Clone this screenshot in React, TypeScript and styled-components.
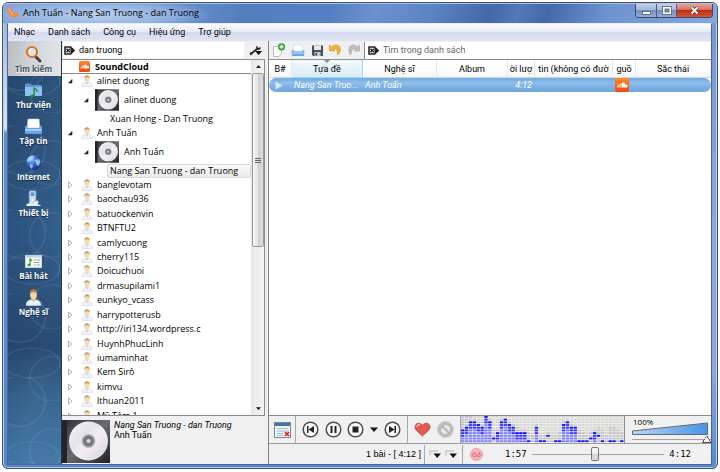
import React from "react";
import styled, { createGlobalStyle, css } from "styled-components";

const narrow = `Roboto, "Noto Sans", sans-serif`;

const Global = createGlobalStyle`
  * { box-sizing: border-box; }
  html, body { margin: 0; background: #fff; }
  body { font-family: "Open Sans", "Noto Sans", sans-serif; font-size: 9px; line-height: 14px; color: #000; overflow: hidden; }
  button, input { font: inherit; color: inherit; margin: 0; padding: 0; border: 0; background: none; }
  button { cursor: default; white-space: nowrap; }
  svg { display: block; flex: none; }
`;

/* ---------- window frame ---------- */

const Frame = styled.div`
  display: flex;
  flex-direction: column;
  height: calc(100vh - 5px);
  margin: 2px;
  padding: 0 5px 3px 4px;
  border: 1px solid #44536b;
  border-radius: 6px;
  background:
    linear-gradient(180deg, #86aadc 0, #b4cbed 12%, #d3e2f5 27%, #5a8fd2 28%, #5189cf 100%) left / 5px 100% no-repeat,
    linear-gradient(180deg, #7396d2 0, #8da4da 40%, #8fa5da 80%, #5189cf 100%) right / 5px 100% no-repeat,
    linear-gradient(180deg, #5189cf, #4d86cc) bottom / 100% 5px no-repeat,
    #5b83c6;
  box-shadow: inset 0 0 0 1px #b9cdea;
`;

const TitleBar = styled.header`
  display: flex;
  align-items: flex-start;
  height: 20px;
  flex: none;
  margin: 0 -5px 0 -4px;
  padding-left: 4px;
  border-radius: 5px 5px 0 0;
  border-top: 1px solid #a9c0e4;
  background:
    radial-gradient(ellipse 115px 16px at 95px 11px, rgba(190, 211, 240, 0.95), rgba(160, 190, 230, 0.75) 60%, transparent),
    linear-gradient(110deg, #84a3d5 0, #6f95cf 22%, #547dc0 34%, #567ec2 46%, #6c91cf 52%, #5b83c5 60%, #4468aa 68%, #5279bb 72%, #4468aa 76%, #6d92d0 84%, #86a8de 100%);
`;

const Title = styled.h1`
  flex: 1;
  margin: 2px 0 0 3px;
  font-size: 9px;
  line-height: 14px;
  font-weight: 400;
`;

const WindowButtons = styled.div`
  display: flex;
  height: 14px;
  margin-right: 4px;
  border: 1px solid #39496a;
  border-top: 0;
  border-radius: 0 0 4px 4px;
  overflow: hidden;
`;

const WindowButton = styled.button<{ $close?: boolean }>`
  display: flex;
  align-items: center;
  justify-content: center;
  width: ${(p) => (p.$close ? 36 : 20)}px;
  border-left: 1px solid #4c5f85;
  background: ${(p) =>
    p.$close
      ? "linear-gradient(#e3a597 0, #d4715e 45%, #bb2d15 50%, #d2573a 100%)"
      : "linear-gradient(#c4d1e8 0, #a3b7da 45%, #7690c0 50%, #93add8 100%)"};
  &:first-child { border-left: 0; }
`;

const Client = styled.div`
  display: flex;
  flex-direction: column;
  flex: 1;
  min-height: 0;
  border: 1px solid #50668c;
  border-top-color: #e9eef8;
  background: #f0f0f0;
`;

const MenuBar = styled.nav`
  display: flex;
  gap: 13px;
  flex: none;
  height: 17px;
  padding: 0 6px 2px;
  font-family: ${narrow};
  background: linear-gradient(#fbfcfe 0, #e6eaf6 45%, #d5dbee 50%, #dfe5f4 100%);
`;

const Columns = styled.div`
  display: grid;
  grid-template-columns: 54px 204px 1fr;
  flex: 1;
  min-height: 0;
`;

/* ---------- sidebar ---------- */

const Sidebar = styled.nav`
  display: flex;
  flex-direction: column;
  min-height: 0;
  border-right: 1px solid #1d3654;
  background:
    radial-gradient(circle at 12px 24px, transparent 24px, rgba(150, 190, 225, 0.16) 25px, transparent 27px) 0 0 / 58px 84px,
    radial-gradient(circle at 44px 50px, transparent 21px, rgba(150, 190, 225, 0.14) 22px, transparent 24px) 0 0 / 66px 72px,
    radial-gradient(ellipse 30px 16px at 24px 40px, transparent 88%, rgba(150, 190, 225, 0.16) 92%, transparent 100%) 0 0 / 54px 94px,
    linear-gradient(100deg, rgba(20, 45, 80, 0.45), transparent 70%),
    linear-gradient(#33597f 0, #34618f 45%, #2a4a70 72%, #38668f 84%, #4779a8 100%);
`;

const SideButton = styled.button<{ $active?: boolean; $gap?: boolean }>`
  display: flex;
  flex-direction: column;
  align-items: center;
  height: 36px;
  flex: none;
  padding: 6px 2px 0 0;
  margin-top: ${(p) => (p.$gap ? 27 : 0)}px;
  font-size: 8px;
  line-height: 10px;
  font-weight: 700;
  color: #fff;
  text-shadow: 0 1px 1px #10233c;
  svg { margin-bottom: 1px; }
  ${(p) =>
    p.$active &&
    css`
      height: 35px;
      padding-top: 4px;
      color: #4a535c;
      text-shadow: 0 1px 0 #fff;
      background: linear-gradient(100deg, #b9bec4, #d8dadd 60%, #e2e3e5);
    `}
`;

/* ---------- left panel ---------- */

const LeftPanel = styled.section`
  display: flex;
  flex-direction: column;
  min-width: 0;
  min-height: 0;
`;

const SearchRow = styled.div`
  display: flex;
  align-items: center;
  height: 18px;
  flex: none;
`;

const SearchBox = styled.label<{ $full?: boolean }>`
  display: flex;
  align-items: center;
  gap: 4px;
  flex: 1;
  min-width: 0;
  height: ${(p) => (p.$full ? 17 : 16)}px;
  padding-left: ${(p) => (p.$full ? 3 : 1)}px;
  border-left: 1px solid ${(p) => (p.$full ? "#888" : "#ddd")};
  background: #fff;
  font-family: ${narrow};
  input { flex: 1; min-width: 0; height: 14px; outline: 0; }
  input::placeholder { color: #666; opacity: 1; }
`;

const PlainButton = styled.button`
  display: flex;
  align-items: center;
  justify-content: center;
`;

const WrenchButton = styled(PlainButton)`
  width: 22px;
`;

const TreeBox = styled.div`
  display: flex;
  flex: 1;
  min-height: 0;
  margin-right: 1px;
  border: 1px solid #8c8c8c;
  border-left: 0;
  background: #fff;
`;

const TreeBody = styled.div`
  display: flex;
  flex-direction: column;
  flex: 1;
  min-width: 0;
  overflow: hidden;
`;

const Source = styled.div`
  display: flex;
  align-items: center;
  gap: 5px;
  height: 14px;
  flex: none;
  padding-left: 17px;
  border-bottom: 1px solid #8a8a8a;
  font-weight: 700;
`;

const ArtistRow = styled.div`
  display: flex;
  align-items: center;
  height: 14px;
  flex: none;
  padding-left: 4px;
  white-space: nowrap;
  svg:first-child { margin-right: 7px; }
  svg + svg { margin-right: 4px; }
`;

const AlbumRow = styled.div`
  display: flex;
  align-items: center;
  height: 24px;
  flex: none;
  padding-left: 20px;
  svg:first-child { margin-right: 5px; }
  svg + svg { margin-right: 5px; }
`;

const TrackRow = styled.div<{ $selected?: boolean }>`
  height: 14px;
  flex: none;
  margin-left: 45px;
  padding-left: 2px;
  border: 1px solid ${(p) => (p.$selected ? "#dadada" : "transparent")};
  border-radius: 2px;
  background: ${(p) => (p.$selected ? "linear-gradient(#fafafa, #e9e9e9)" : "none")};
  line-height: 12px;
  white-space: nowrap;
`;

const ArtistList = styled.div`
  display: grid;
  grid-auto-rows: 1fr;
  height: 245px;
  flex: none;
`;

const ScrollBar = styled.div`
  display: flex;
  flex-direction: column;
  align-items: center;
  width: 13px;
  border-left: 1px solid #e4e4e4;
  background: linear-gradient(90deg, #e9e9e9, #f4f4f4);
`;

const ScrollArrow = styled(PlainButton)`
  width: 12px;
  height: 13px;
`;

const Thumb = styled.div`
  display: flex;
  align-items: center;
  justify-content: center;
  width: 12px;
  height: 174px;
  border: 1px solid #9a9a9a;
  border-radius: 2px;
  background: linear-gradient(90deg, #f6f6f6, #e4e4e4 45%, #cfcfcf 50%, #dcdcdc);
`;

const Filler = styled.div`
  flex: 1;
`;

const NowPlaying = styled.div`
  display: flex;
  gap: 4px;
  height: 48px;
  flex: none;
  padding-top: 4px;
  font-family: ${narrow};
  line-height: 10px;
  p { margin: 0; white-space: nowrap; }
`;

/* ---------- right panel ---------- */

const RightPanel = styled.section`
  display: flex;
  flex-direction: column;
  min-width: 0;
  min-height: 0;
  margin-left: 2px;
  border-left: 1px solid #808080;
`;

const Toolbar = styled.div`
  display: flex;
  align-items: center;
  height: 19px;
  flex: none;
  border-bottom: 1px solid #8c8c8c;
`;

const Tools = styled.div`
  display: flex;
  align-items: center;
  justify-content: space-between;
  width: 95px;
  padding: 0 4px 0 3px;
`;

const Playlist = styled.div`
  flex: 1;
  min-height: 0;
  overflow: hidden;
  background: #fff;
  font-family: ${narrow};
`;

const Table = styled.table`
  width: 100%;
  table-layout: fixed;
  border-collapse: separate;
  border-spacing: 0;
`;

const Head = styled.th<{ $sorted?: boolean }>`
  height: 18px;
  padding: 0;
  border-right: 1px solid ${(p) => (p.$sorted ? "#96d9f9" : "#e4e8ef")};
  border-bottom: 1px solid ${(p) => (p.$sorted ? "#96d9f9" : "#d5d5d5")};
  background: ${(p) => (p.$sorted ? "linear-gradient(#f2f9fc, #d8ecf6)" : "linear-gradient(#fff 40%, #f3f4f6)")};
  font-weight: 400;
  white-space: nowrap;
  overflow: hidden;
`;

const HeadLabel = styled.div`
  display: flex;
  justify-content: center;
  line-height: 15px;
  padding-top: 2px;
`;

const SortMark = styled.div`
  display: flex;
  justify-content: center;
  height: 0;
`;

const Row = styled.tr`
  color: #fff;
  font-style: italic;
  td {
    height: 14px;
    padding: 0 3px 0 2px;
    line-height: 14px;
    white-space: nowrap;
    background: linear-gradient(#6fa8e0 0, #8fbeec 35%, #7fb2e6 60%, #72a7dd 100%);
  }
  td:first-child { border-radius: 7px 0 0 7px; padding-left: 6px; }
  td:last-child { border-radius: 0 7px 7px 0; }
`;

const EndCell = styled.td`
  text-align: right;
`;

const Controls = styled.div`
  display: flex;
  height: 29px;
  flex: none;
  border-top: 1px solid #8c8c8c;
  border-bottom: 1px solid #9a9a9a;
`;

const Group = styled.div<{ $w: number }>`
  display: flex;
  align-items: center;
  justify-content: space-evenly;
  width: ${(p) => p.$w}px;
  flex: none;
  border-right: 1px solid #a8a8a8;
`;

const Spectrum = styled.div`
  flex: 1;
  min-width: 0;
  border-right: 1px solid #8c8c8c;
  svg { width: 100%; height: 27px; }
`;

const Volume = styled.label`
  display: flex;
  flex-direction: column;
  width: 86px;
  flex: none;
  padding: 1px 4px 0 7px;
  font-size: 8px;
  line-height: 8px;
  svg { margin-top: -4px; }
`;

const VolumeText = styled.span`
  padding: 1px 0 0 1px;
`;

const Slider = styled.input<{ $thumb: "tri" | "box" }>`
  appearance: none;
  flex: ${(p) => (p.$thumb === "box" ? "1" : "none")};
  min-width: 0;
  width: ${(p) => (p.$thumb === "tri" ? "79px" : "auto")};
  height: ${(p) => (p.$thumb === "tri" ? 8 : 16)}px;
  background: linear-gradient(#a5a5a5, #a5a5a5) center / 100% 1px no-repeat;
  ${(p) =>
    p.$thumb === "box"
      ? css`
          &::-webkit-slider-thumb {
            appearance: none;
            width: 8px;
            height: 14px;
            border: 1px solid #777;
            border-radius: 2px;
            background: linear-gradient(#fafafa, #e9e9e9 50%, #d2d2d2 55%, #dedede);
          }
        `
      : css`
          &::-webkit-slider-thumb {
            appearance: none;
            width: 9px;
            height: 7px;
            background:
              linear-gradient(#555, #555) bottom / 100% 1px no-repeat,
              linear-gradient(to bottom right, transparent 46%, #555 47% 56%, #fff 57%) left / 50% 100% no-repeat,
              linear-gradient(to bottom left, transparent 46%, #555 47% 56%, #fff 57%) right / 50% 100% no-repeat;
          }
        `}
`;

const StatusBar = styled.footer`
  display: flex;
  align-items: center;
  height: 20px;
  flex: none;
`;

const Count = styled.div`
  display: flex;
  align-items: center;
  justify-content: flex-end;
  width: 156px;
  height: 19px;
  padding-right: 3px;
  border-right: 1px solid #a8a8a8;
  font-family: "Liberation Sans", sans-serif;
`;

const StatusGroup = styled(Group)`
  height: 19px;
`;

const Seek = styled.div`
  display: flex;
  align-items: center;
  gap: 5px;
  flex: 1;
  min-width: 0;
  padding: 0 20px 0 7px;
  font-family: "DejaVu Sans Mono", monospace;
  svg { margin-right: 17px; }
`;

/* ---------- drawings ---------- */

const Arrow = ({ open }: { open?: boolean }) => (
  <svg width="8" height="8" viewBox="0 0 8 8">
    {open ? <path d="M6 2.500v3.500H2.500z" fill="#222" stroke="#222" strokeWidth=".6" /> : <path d="M2.500 1l3.500 3-3.500 3z" fill="#fff" stroke="#a8a8a8" strokeWidth=".9" />}
  </svg>
);

const Person = ({ size = 12 }: { size?: number }) => (
  <svg width={size} height={size} viewBox="0 0 16 16" opacity={size > 12 ? 1 : 0.8}>
    <path d="M1 15.500c0-4 2.500-5 5-5.500h4c2.500.500 5 1.500 5 5.500z" fill="#e9f0f8" stroke="#b9cbe0" strokeWidth=".7" />
    <path d="M6 9.500l2 3 2-3z" fill="#e8b98d" />
    <ellipse cx="8" cy="5.500" rx="3.200" ry="4.300" fill="#f6d2ab" />
    <path d="M4.600 5.500C4 1.500 6 .3 8 .3s4 1.200 3.400 5.200C11 3.500 10 3 8 3s-3 .500-3.400 2.500z" fill="#c07f3c" />
  </svg>
);

const Disc = ({ w, h }: { w: number; h: number }) => (
  <svg width={w} height={h} viewBox="0 0 48 43">
    <defs>
      <linearGradient id={`case${w}`} x2="1" y2="1">
        <stop offset="0" stopColor="#2c2e30" />
        <stop offset=".5" stopColor="#6a6d70" />
        <stop offset="1" stopColor="#1e1f21" />
      </linearGradient>
      <linearGradient id={`disc${w}`} x2="1" y2="1">
        <stop offset="0" stopColor="#fafafa" />
        <stop offset=".35" stopColor="#e4e3e8" />
        <stop offset=".55" stopColor="#f4eef2" />
        <stop offset="1" stopColor="#d3d4d8" />
      </linearGradient>
    </defs>
    <rect width="48" height="43" fill={`url(#case${w})`} />
    <rect width="5" height="43" fill="#222426" />
    <circle cx="26.500" cy="21" r="19.500" fill={`url(#disc${w})`} />
    <circle cx="26.500" cy="21" r="7" fill="#b5b5b8" />
    <circle cx="26.500" cy="21" r="5.500" fill="#77797c" />
    <circle cx="26.500" cy="21" r="2" fill="#ddd" />
  </svg>
);

const SoundCloud = ({ size }: { size: number }) => (
  <svg width={size} height={size} viewBox="0 0 14 14">
    <defs>
      <linearGradient id={`sc${size}`} x2="0" y2="1">
        <stop offset="0" stopColor="#ff8a2a" />
        <stop offset="1" stopColor="#f4470c" />
      </linearGradient>
    </defs>
    <rect width="14" height="14" rx="2" fill={`url(#sc${size})`} />
    <path d="M7 9.500V4.800a2.600 2.600 0 0 1 3.400 2 1.500 1.500 0 1 1 .4 2.700zM2 7.500h.7v2H2zM3.300 6.500h.8v3h-.8zM4.600 6h.7v3.500h-.7zM5.700 5h.8v4.500h-.8z" fill="#fff" />
  </svg>
);

const ClearIcon = () => (
  <svg width="11" height="9" viewBox="0 0 11 9">
    <path d="M1 1h5.500L10 4.500 6.500 8H1z" fill="#fff" stroke="#222" strokeWidth="1.600" />
    <path d="M6.500 1v7L10 4.500z" fill="#222" />
    <path d="M2.500 2.700l3.500 3.600m0-3.600L2.500 6.300" stroke="#222" strokeWidth="1.400" />
  </svg>
);

const Wrench = () => (
  <svg width="13" height="13" viewBox="0 0 13 13">
    <path d="M2 9.800L8.500 4.500" stroke="#333" strokeWidth="2" />
    <path d="M8 1.500l1 2.500 2.500-1c.7 2-1 3.500-3 3S6.500 3 8 1.500zM1 8.500c1.300-.7 3.200.3 2.700 2l-1.200-.2-.5 1.200C.8 11 .3 9.500 1 8.500z" fill="#333" />
    <path d="M6 7h7L9.500 11z" fill="#111" />
  </svg>
);

const Search = () => (
  <svg width="17" height="18" viewBox="0 0 17 18">
    <path d="M10.500 11.500l4.500 4.500" stroke="#4a4038" strokeWidth="3" strokeLinecap="round" />
    <circle cx="7" cy="7" r="5" fill="#dfe3e4" stroke="#cf7a28" strokeWidth="2.200" />
    <path d="M4 7a3 3 0 0 1 3-3" stroke="#fff" fill="none" />
  </svg>
);

const Library = () => (
  <svg width="19" height="17" viewBox="0 0 19 17">
    <path d="M1 2.500q0-1 1-1h4l1.500 1.500H17q1 0 1 1V13q0 1-1 1H2q-1 0-1-1z" fill="#5b96dc" />
    <path d="M1 5h17v8q0 1-1 1H2q-1 0-1-1z" fill="#8fc0f2" />
    <path d="M10 14V6q3 1 3 4" stroke="#1a8a2b" strokeWidth="1.300" fill="none" />
    <ellipse cx="8.300" cy="14" rx="2" ry="1.500" fill="#1a8a2b" />
  </svg>
);

const Files = ({ w = 19, h = 17 }: { w?: number; h?: number }) => (
  <svg width={w} height={h} viewBox="0 0 19 17">
    <path d="M4 1h11l1 9H3z" fill="#fff" stroke="#b9cbe0" strokeWidth=".6" />
    <path d="M1 8h2.500v2h12V8H18v7q0 1-1 1H2q-1 0-1-1z" fill="#6ba4e6" />
    <path d="M1.500 11h16v2h-16z" fill="#a9cff6" />
  </svg>
);

const Globe = () => (
  <svg width="17" height="17" viewBox="0 0 17 17">
    <defs>
      <radialGradient id="globe" cx=".35" cy=".3" r=".8">
        <stop offset="0" stopColor="#9cc8fa" />
        <stop offset=".5" stopColor="#2f64c4" />
        <stop offset="1" stopColor="#12266e" />
      </radialGradient>
    </defs>
    <circle cx="8.500" cy="8.500" r="7.500" fill="url(#globe)" />
    <path d="M3 4q3-3 6-2l-1 3-3 1-1 2-2-1zM10 6l4-1 1.500 3-2 4-2-1-.5-2.500zM5 10l3 1-1 4-2-2z" fill="#b9dcf4" opacity=".75" />
  </svg>
);

const Device = () => (
  <svg width="17" height="17" viewBox="0 0 17 18">
    <rect x="4" y="1" width="7" height="14" rx="1" fill="#dce9f7" stroke="#89a8cc" />
    <rect x="5.500" y="2.500" width="4" height="4" fill="#5d90cf" />
    <circle cx="7.500" cy="10.500" r="2" fill="#fff" stroke="#89a8cc" strokeWidth=".7" />
    <path d="M1 15q3-2 7 0l4-4 2 1-1 3 3 1v1H1z" fill="#e5edf6" />
  </svg>
);

const Song = () => (
  <svg width="17" height="17" viewBox="0 0 17 17">
    <rect x=".5" y="2.500" width="16" height="12" fill="#f4f6f4" stroke="#c9d2d9" />
    <path d="M1 3h15v1.500H1z" fill="#c3d3e2" />
    <path d="M5 12V6l2 2" stroke="#2da23a" strokeWidth="1.200" fill="none" />
    <ellipse cx="4" cy="12" rx="1.600" ry="1.200" fill="#2da23a" />
    <path d="M9 7h2m1 0h3M9 9.500h5M9 12h2m1 0h3" stroke="#9aa8a0" />
  </svg>
);

const NewFile = () => (
  <svg width="14" height="14" viewBox="0 0 14 14">
    <path d="M1.500 3.500h8v7l-2.500 3H1.500z" fill="#fdfdfd" stroke="#bcbcbc" />
    <circle cx="9.500" cy="3.800" r="3.600" fill="#2ca33a" />
    <path d="M9.500 1.800v4m-2-2h4" stroke="#fff" strokeWidth="1.400" />
  </svg>
);

const Save = () => (
  <svg width="13" height="13" viewBox="0 0 13 13">
    <path d="M1 1.500h11v10.500H2l-1-1z" fill="#4a4f58" />
    <path d="M3 1.500h7v4.500H3z" fill="#e4e9ee" />
    <path d="M3.500 8h6v4h-6z" fill="#c3c9d0" />
    <path d="M4.500 9h1.500v2.500H4.500z" fill="#333" />
  </svg>
);

const Undo = ({ redo }: { redo?: boolean }) => (
  <svg width="13" height="12" viewBox="0 0 13 12">
    <path
      d={redo ? "M12.500 1v6H7l2-2C6 4 4 6 4 11 0 7 2 1 6 1q2.500 0 4.500 2z" : "M.5 1v6H6L4 5c3-1 5 1 4.500 6 5-4 3-10-1.500-10Q4.500 1 2.500 3z"}
      fill={redo ? "#bdbdbd" : "#f2b33d"}
      stroke={redo ? "#a5a5a5" : "#cf8a1c"}
      strokeWidth=".6"
    />
  </svg>
);

const Transport = ({ d }: { d: string }) => (
  <svg width="17" height="17" viewBox="0 0 17 17">
    <circle cx="8.500" cy="8.500" r="7.300" fill="#fafafa" stroke="#4c4c4c" strokeWidth="1.500" />
    <path d={d} fill="#222" />
  </svg>
);

const Down = ({ w = 8 }: { w?: number }) => (
  <svg width={w} height="5" viewBox="0 0 8 5">
    <path d="M0 .500h8L4 5z" fill="#111" />
  </svg>
);

const Heart = () => (
  <svg width="17" height="15" viewBox="0 0 17 15">
    <path d="M8.500 14C5 10.500 1 8.500 1 4.800 1 1 6.500-.2 8.500 3.500 10.500-.2 16 1 16 4.800c0 3.700-4 5.700-7.500 9.200z" fill="#e05a52" stroke="#b54039" strokeWidth=".8" />
    <path d="M3 5q.3-2.500 3-2.200" stroke="#f6b5ae" strokeWidth="1.300" fill="none" />
  </svg>
);

const Ban = () => (
  <svg width="17" height="17" viewBox="0 0 17 17">
    <circle cx="8.500" cy="8.500" r="6.300" fill="#e9e9e9" stroke="#bdbdbd" strokeWidth="2.600" />
    <path d="M4 4l9 9" stroke="#bdbdbd" strokeWidth="2.600" />
    <circle cx="8.500" cy="8.500" r="7.800" fill="none" stroke="#999" strokeWidth=".5" />
    <circle cx="8.500" cy="8.500" r="4.900" fill="none" stroke="#999" strokeWidth=".5" />
  </svg>
);

const ListWindow = () => (
  <svg width="17" height="16" viewBox="0 0 17 16">
    <rect x=".5" y=".5" width="16" height="15" fill="#eef3f8" stroke="#76889c" />
    <path d="M1 1h15v3H1z" fill="#47719f" />
    <path d="M3 6.500h11M3 9h11M3 11.500h6M3 13.500h6" stroke="#a8bacb" />
    <path d="M11 10l4 4m0-4l-4 4" stroke="#cf1f1f" strokeWidth="1.600" />
  </svg>
);

const LastFm = () => (
  <svg width="13" height="13" viewBox="0 0 13 13">
    <circle cx="6.500" cy="6.500" r="6" fill="#f7b4ba" stroke="#ec9aa2" />
    <path d="M6 8.200Q3 9.500 2.500 6.800 3 4 5.300 5l1.700 3q3 1.300 3.500-.6 0-1-1.800-1.200Q7.500 5 10 4.800" stroke="#e05f6c" fill="none" />
  </svg>
);

const Mode = () => (
  <svg width="13" height="10" viewBox="0 0 13 10">
    <path d="M1 6.500V2h8" stroke="#d2d2d2" strokeWidth="2" fill="none" />
    <path d="M4.500 4.500H12L8.200 9z" fill="#111" />
  </svg>
);

const levels = [5, 6, 8, 8, 7, 6, 10, 8, 2, 4, 8, 9, 7, 6, 4, 4, 4, 1, 0, 6, 1, 1, 3, 0, 1, 1, 7, 8, 6, 6, 1, 1, 1, 2, 4, 3, 1, 0, 1, 1, 0, 1];
const trails = [10, 10, 10, 9, 8, 8, 10, 9, 5, 5, 9, 9, 8, 7, 6, 5, 5, 4, 3, 7, 3, 3, 4, 3, 3, 4, 8, 8, 7, 6, 5, 4, 3, 4, 5, 6, 5, 3, 6, 6, 5, 4];
const peaksOnly = [8, 17, 22, 33, 35];

const SpectrumBars = () => (
  <svg viewBox="0 0 168 30" preserveAspectRatio="none">
    <rect width="168" height="30" fill="#f1f1f1" />
    {levels.map((level, c) => (
      <g key={c}>
        {level > 1 && !peaksOnly.includes(c) && <rect x={c * 4} y={30 - level * 3} width="3.500" height={level * 3} fill="#d9d9fc" />}
        {Array.from({ length: 10 }, (_, r) => {
          const n = r + 1;
          const lit = n < level && !peaksOnly.includes(c);
          const fill = n === level ? "#0c0cf6" : lit ? (level - n < 3 ? "#3434f4" : "#8080f8") : n <= trails[c] ? "#c2c2c2" : "#d6d6d2";
          return <rect key={r} x={c * 4} y={30 - n * 3} width="3.500" height="2" fill={fill} />;
        })}
      </g>
    ))}
  </svg>
);

const artists = [
  "banglevotam", "baochau936", "batuockenvin", "BTNFTU2", "camlycuong", "cherry115", "Doicuchuoi", "drmasupilami1",
  "eunkyo_vcass", "harrypotterusb", "http://iri134.wordpress.c", "HuynhPhucLinh", "iumaminhat", "Kem Sirô", "kimvu",
  "lthuan2011", "Mỹ Tâm 1",
];

const columns: [string, number | undefined][] = [
  ["B#", 23], ["Tựa đề", 71], ["Nghệ sĩ", 74], ["Album", 71], ["ời lượ", 27], ["tin (không có đườ", 78], ["guồ", 23], ["Sắc thái", undefined],
];

export default function App() {
  return (
    <>
      <Global />
      <Frame>
        <TitleBar>
          <svg width="13" height="14" viewBox="0 0 13 14">
            <path d="M1.500 3c1.500-1 2.500.500 2.500 2.500.500 3 3 3.500 5 3.500 2.500 0 4 1 3 2.500-1.500 2-6 2.500-8.500.500C.5 9.500 0 5 1.500 3z" fill="#f58a3c" />
            <path d="M2 4.500q.5 5 4.500 6.500" stroke="#ffc48e" fill="none" />
          </svg>
          <Title>Anh Tuấn - Nang San Truong - dan Truong</Title>
          <WindowButtons>
            <WindowButton aria-label="Minimize">
              <svg width="9" height="8" viewBox="0 0 9 8"><rect x=".5" y="4.500" width="8" height="3" fill="#fff" stroke="#4b5a78" strokeWidth=".8" /></svg>
            </WindowButton>
            <WindowButton aria-label="Maximize">
              <svg width="10" height="9" viewBox="0 0 10 9">
                <rect x=".5" y=".5" width="9" height="8" fill="#fff" stroke="#4b5a78" strokeWidth=".8" />
                <rect x="3" y="3" width="4" height="3" fill="#7a92c0" stroke="#4b5a78" strokeWidth=".8" />
              </svg>
            </WindowButton>
            <WindowButton $close aria-label="Close">
              <svg width="9" height="9" viewBox="0 0 9 9">
                <path d="M1.500 1.500l6 6m0-6l-6 6" stroke="#5c2a2a" strokeWidth="3.400" />
                <path d="M1.500 1.500l6 6m0-6l-6 6" stroke="#fff" strokeWidth="2" />
              </svg>
            </WindowButton>
          </WindowButtons>
        </TitleBar>
        <Client>
          <MenuBar>
            {["Nhạc", "Danh sách", "Công cụ", "Hiệu ứng", "Trợ giúp"].map((m) => (
              <button key={m}>{m}</button>
            ))}
          </MenuBar>
          <Columns>
            <Sidebar>
              <SideButton $active><Search />Tìm kiếm</SideButton>
              <SideButton><Library />Thư viện</SideButton>
              <SideButton><Files />Tập tin</SideButton>
              <SideButton><Globe />Internet</SideButton>
              <SideButton><Device />Thiết bị</SideButton>
              <SideButton $gap><Song />Bài hát</SideButton>
              <SideButton><Person size={17} />Nghệ sĩ</SideButton>
            </Sidebar>
            <LeftPanel>
              <SearchRow>
                <SearchBox>
                  <ClearIcon />
                  <input aria-label="Search" defaultValue="dan truong" />
                </SearchBox>
                <WrenchButton aria-label="Options"><Wrench /></WrenchButton>
              </SearchRow>
              <TreeBox>
                <TreeBody>
                  <Source><SoundCloud size={11} />SoundCloud</Source>
                  <ArtistRow><Arrow open /><Person />alinet duong</ArtistRow>
                  <AlbumRow><Arrow open /><Disc w={24} h={22} />alinet duong</AlbumRow>
                  <TrackRow>Xuan Hong - Dan Truong</TrackRow>
                  <ArtistRow><Arrow open /><Person />Anh Tuấn</ArtistRow>
                  <AlbumRow><Arrow open /><Disc w={24} h={22} />Anh Tuấn</AlbumRow>
                  <TrackRow $selected>Nang San Truong - dan Truong</TrackRow>
                  <ArtistList>
                    {artists.map((a) => (
                      <ArtistRow key={a}><Arrow /><Person />{a}</ArtistRow>
                    ))}
                  </ArtistList>
                </TreeBody>
                <ScrollBar>
                  <ScrollArrow aria-label="Scroll up"><svg width="5" height="3" viewBox="0 0 5 3"><path d="M0 3L2.500 0 5 3z" fill="#222" /></svg></ScrollArrow>
                  <Thumb><svg width="6" height="7" viewBox="0 0 6 7"><path d="M0 1.500h6M0 3.500h6M0 5.500h6" stroke="#666" /></svg></Thumb>
                  <Filler />
                  <ScrollArrow aria-label="Scroll down"><Down w={5} /></ScrollArrow>
                </ScrollBar>
              </TreeBox>
              <NowPlaying>
                <Disc w={48} h={43} />
                <div>
                  <p><i>Nang San Truong - dan Truong</i></p>
                  <p>Anh Tuấn</p>
                </div>
              </NowPlaying>
            </LeftPanel>
            <RightPanel>
              <Toolbar>
                <Tools>
                  <PlainButton aria-label="New"><NewFile /></PlainButton>
                  <PlainButton aria-label="Open"><Files w={14} h={13} /></PlainButton>
                  <PlainButton aria-label="Save"><Save /></PlainButton>
                  <PlainButton aria-label="Undo"><Undo /></PlainButton>
                  <PlainButton aria-label="Redo"><Undo redo /></PlainButton>
                </Tools>
                <SearchBox $full>
                  <ClearIcon />
                  <input aria-label="Search in playlist" placeholder="Tìm trong danh sách" />
                </SearchBox>
              </Toolbar>
              <Playlist>
                <Table>
                  <colgroup>
                    {columns.map(([name, w]) => <col key={name} width={w} />)}
                  </colgroup>
                  <thead>
                    <tr>
                      {columns.map(([name], i) => (
                        <Head key={name} $sorted={i === 1}>
                          {i === 1 && <SortMark><svg width="6" height="3" viewBox="0 0 6 3"><path d="M0 0h6L3 3z" fill="#5c93b8" /></svg></SortMark>}
                          <HeadLabel>{name}</HeadLabel>
                        </Head>
                      ))}
                    </tr>
                  </thead>
                  <tbody>
                    <Row>
                      <td><svg width="8" height="9" viewBox="0 0 8 9"><path d="M.5.500l7 4-7 4z" fill="#d9ebfb" /></svg></td>
                      <td>Nang San Truo...</td>
                      <td>Anh Tuấn</td>
                      <td />
                      <EndCell>4:12</EndCell>
                      <td />
                      <td><SoundCloud size={14} /></td>
                      <td />
                    </Row>
                  </tbody>
                </Table>
              </Playlist>
              <Controls>
                <Group $w={27}><PlainButton aria-label="Playlist"><ListWindow /></PlainButton></Group>
                <Group $w={112}>
                  <PlainButton aria-label="Previous"><Transport d="M5 5h1.500v7H5zM12 5v7L6.500 8.500z" /></PlainButton>
                  <PlainButton aria-label="Pause"><Transport d="M5.500 5h2v7h-2zM9.500 5h2v7h-2z" /></PlainButton>
                  <PlainButton aria-label="Stop"><Transport d="M5.500 5.500h6v6h-6z" /></PlainButton>
                  <PlainButton aria-label="Stop options"><Down /></PlainButton>
                  <PlainButton aria-label="Next"><Transport d="M10.500 5H12v7h-1.500zM5 5v7l5.500-3.500z" /></PlainButton>
                </Group>
                <Group $w={53}>
                  <PlainButton aria-label="Love"><Heart /></PlainButton>
                  <PlainButton aria-label="Ban"><Ban /></PlainButton>
                </Group>
                <Spectrum><SpectrumBars /></Spectrum>
                <Volume>
                  <VolumeText>100%</VolumeText>
                  <svg width="76" height="13" viewBox="0 0 76 13">
                    <defs>
                      <linearGradient id="vol"><stop offset="0" stopColor="#b9d6ef" /><stop offset="1" stopColor="#4795e6" /></linearGradient>
                    </defs>
                    <path d="M.5 9L75.500 1v11.500H.5z" fill="url(#vol)" stroke="#5f6a75" />
                  </svg>
                  <Slider $thumb="tri" type="range" min={0} max={100} defaultValue={100} aria-label="Volume" />
                </Volume>
              </Controls>
              <StatusBar>
                <Count>1 bài - [ 4:12 ]</Count>
                <StatusGroup $w={38}>
                  <PlainButton aria-label="Repeat"><Mode /></PlainButton>
                  <PlainButton aria-label="Shuffle"><Mode /></PlainButton>
                </StatusGroup>
                <Seek>
                  <LastFm />
                  <span>1:57</span>
                  <Slider $thumb="box" type="range" min={0} max={252} defaultValue={119} aria-label="Position" />
                  <span>4:12</span>
                </Seek>
              </StatusBar>
            </RightPanel>
          </Columns>
        </Client>
      </Frame>
    </>
  );
}
